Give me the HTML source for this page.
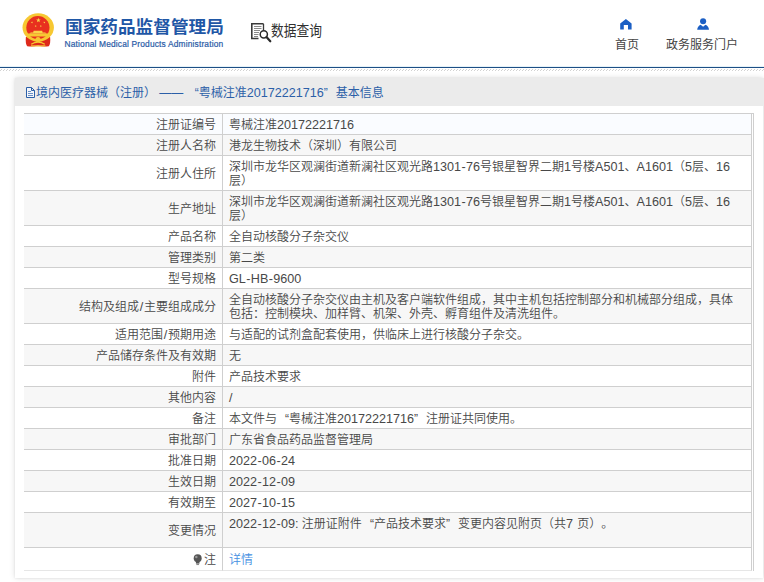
<!DOCTYPE html>
<html lang="zh-CN">
<head>
<meta charset="utf-8">
<title>国家药品监督管理局 数据查询</title>
<style>
*{box-sizing:border-box;margin:0;padding:0}
html,body{width:764px;height:582px;overflow:hidden;background:#fff}
body{text-spacing-trim:space-all;font-family:"Liberation Sans","Noto Sans CJK SC",sans-serif;font-size:12px;color:#444;position:relative}
.hdr{position:absolute;left:0;top:0;width:764px;height:66px;background:#fff}
.emblem{position:absolute;left:19px;top:10px;width:38px;height:40px}
.t1{position:absolute;left:64.5px;top:15px;font-size:16.5px;font-weight:bold;color:#1f57a6;letter-spacing:0;transform:scaleX(1.07);transform-origin:0 0;line-height:24px;white-space:nowrap}
.t2{-webkit-text-stroke:.2px #2a5ba6;position:absolute;left:64.5px;top:37.5px;font-size:8.4px;letter-spacing:.165px;color:#2a5ba6;line-height:12px;white-space:nowrap}
.q{position:absolute;left:270.5px;top:19px;font-size:15px;transform:scaleX(.85);transform-origin:0 0;color:#303030;line-height:24px;white-space:nowrap}
.qi{position:absolute;left:250px;top:22px;width:22px;height:22px}
.nav{position:absolute;top:36.5px;font-size:12px;color:#444;line-height:16px;white-space:nowrap}
.ni{position:absolute}
.bar{position:absolute;left:0;top:66px;width:764px;height:2px;background:linear-gradient(#e6f2f8 0,#e6f2f8 1px,#1d4f85 1px,#1d4f85 2px)}
.hatch{position:absolute;left:0;top:69px;width:764px;height:2px;background:repeating-linear-gradient(90deg,#fff 0,#fff 1px,#d2d2d2 1px,#d2d2d2 2px,#fff 2px,#fff 3px) 0 0/100% 1px no-repeat,repeating-linear-gradient(90deg,#d2d2d2 0,#d2d2d2 1px,#fff 1px,#fff 3px) 0 1px/100% 1px no-repeat}
.box{position:absolute;left:15px;top:78px;width:748px;height:500px;background:#fff;box-shadow:0 0 2px rgba(0,0,0,.08),0 0 6px rgba(0,0,0,.13)}
.bh{height:28px;overflow:hidden;background:#ebebeb;width:760px;color:#2b5fa8;line-height:31px;padding-left:21px;white-space:nowrap;position:relative}
.bh svg{position:absolute;left:11px;top:9px}
.under{position:absolute;left:0;top:578px;width:764px;height:4px;background:#efefef}
table{position:absolute;left:9px;top:35px;width:730px;border-collapse:separate;border-spacing:0;border-top:1px solid #cfcfcf;border-right:1px solid #cfcfcf;padding-right:1px;table-layout:fixed}
td{border-bottom:1px solid #cfcfcf;line-height:14px;padding:4px 6px 2px;white-space:nowrap;vertical-align:middle;font-size:12px;color:#484848;font-weight:350}
td.l{width:199px;text-align:right;border-right:1px solid #cfcfcf;white-space:nowrap}
td.v{border-right:1px solid #cfcfcf}
tr.g td{background:#f7f7f7}
tr.h td{background:#fafcff}
tr:last-child td{border-bottom-color:#e6e6e6;height:23px}
a{color:#4690e2;text-decoration:none}
.n{font-size:12.6px}
.s{margin:0 .7px}
.n i{font-style:normal;margin:0 .4px}
.ql,.qr{display:inline-block;width:12px}
.ql{text-align:right}
.qr{text-align:left}
.vwrap{border-right:1px solid #fff}
</style>
</head>
<body>
<div class="hdr">
<svg class="emblem" viewBox="0 0 38 40">
<path d="M6.9 27 Q6.2 33.5 8.2 36.2 Q13.5 37.2 19 35.6 Q24.5 37.2 29.8 36.2 Q31.8 33.5 31.1 27Z" fill="#de2a1b"/>
<ellipse cx="19.2" cy="17.5" rx="15.7" ry="14.2" fill="#f7c832"/>
<circle cx="18.9" cy="17.6" r="11.6" fill="#e8301f"/>
<path d="M7.6 23.4 H30.2 L29.2 26.4 H8.6Z" fill="#f7c832"/>
<path d="M10.3 23.6 H27.7 L26.2 22.6 H23.6 L23.2 20.7 H14.6 L14.2 22.6 H11.8Z" fill="#f9d648"/>
<path d="M10 27.3 Q19 33.4 28 27.3" fill="none" stroke="#f7c832" stroke-width="1.1"/>
<circle cx="19" cy="29.6" r="2.6" fill="#f7c832"/>
<path d="M12.2 34.2 Q19 30.2 25.8 34.2" fill="none" stroke="#f7c832" stroke-width="1.3"/>
<path d="M12 35.9 H26.4" stroke="#f4b93a" stroke-width="1.3"/>
<polygon points="19.40,7.80 19.99,9.38 21.68,9.46 20.36,10.51 20.81,12.14 19.40,11.21 17.99,12.14 18.44,10.51 17.12,9.46 18.81,9.38" fill="#f9d94a"/><polygon points="13.55,11.55 13.42,12.31 14.08,12.73 13.31,12.84 13.11,13.59 12.77,12.90 12.00,12.95 12.55,12.40 12.26,11.68 12.95,12.04" fill="#f9d94a"/><polygon points="24.75,11.55 25.35,12.04 26.04,11.68 25.75,12.40 26.30,12.95 25.53,12.90 25.19,13.59 24.99,12.84 24.22,12.73 24.88,12.31" fill="#f9d94a"/><polygon points="16.98,15.04 17.06,15.81 17.80,16.04 17.09,16.35 17.09,17.13 16.58,16.55 15.85,16.79 16.24,16.12 15.78,15.50 16.53,15.67" fill="#f9d94a"/><polygon points="21.52,15.04 21.97,15.67 22.72,15.50 22.26,16.12 22.65,16.79 21.92,16.55 21.41,17.13 21.41,16.35 20.70,16.04 21.44,15.81" fill="#f9d94a"/>
</svg>
<div class="t1">国家药品监督管理局</div>
<div class="t2">National Medical Products Administration</div>
<svg class="qi" viewBox="0 0 22 22">
<path d="M13.5 1.8 H1.8 V16.5 H8.5" fill="none" stroke="#3a3a3a" stroke-width="1.6"/>
<path d="M13.5 1.8 V8" fill="none" stroke="#3a3a3a" stroke-width="1.3"/>
<path d="M4 4.5 H11.5 M4 6.5 H11.5 M4 8.5 H10 M4 10.5 H9 M4 12.5 H8.5 M4 14.5 H8" stroke="#8a8a8a" stroke-width="1"/>
<circle cx="13.8" cy="12.3" r="3.6" fill="#fff" stroke="#2a2a2a" stroke-width="1.5"/>
<path d="M16.5 15 L20.3 19.3" stroke="#2a2a2a" stroke-width="2.2" stroke-linecap="round"/>
</svg>
<div class="q">数据查询</div>
<svg class="ni" style="left:620.3px;top:19px" width="11.8" height="10.8" viewBox="0 0 11.8 10.8"><path d="M5.9 0 L0.2 4.6 V10.6 H3.8 V6.1 H8 V10.6 H11.6 V4.6Z" fill="#1b5fc4"/></svg>
<div class="nav" style="left:615px">首页</div>
<svg class="ni" style="left:696.9px;top:18px" width="12.2" height="12" viewBox="0 0 12.2 12"><circle cx="6.1" cy="3.2" r="3.05" fill="#1b5fc4"/><path d="M0.2 11.8 Q0.5 8.3 3.7 6.8 L6.1 8.7 L8.5 6.8 Q11.7 8.3 12 11.8Z" fill="#1b5fc4"/></svg>
<div class="nav" style="left:666px">政务服务门户</div>
</div>
<div class="bar"></div>
<div class="hatch"></div>
<div class="box">
<div class="bh"><svg width="9" height="11" viewBox="0 0 9 11"><path d="M0.5 0.5 H5.5 L8.5 3.5 V10.5 H0.5Z M5.5 0.5 V3.5 H8.5" fill="#f4f6fa" stroke="#2b5fa8" stroke-width="1"/><path d="M2 4.5 H5 M2 6.5 H7 M2 8.5 H7" stroke="#6a8fc6" stroke-width="1"/></svg>境内医疗器械（注册） ——  <span class="ql">“</span>粤械注准<span class="n">20172221716</span><span class="qr">”</span>基本信息</div>
<table cellspacing="0">
<tr class="h"><td class="l">注册证编号</td><td class="v">粤械注准<span class="n">20172221716</span></td></tr>
<tr class="g"><td class="l">注册人名称</td><td class="v">港龙生物技术（深圳）有限公司</td></tr>
<tr><td class="l">注册人住所</td><td class="v">深圳市龙华区观澜街道新澜社区观光路<span class="n">1301<i>-</i>76</span>号银星智界二期<span class="n">1</span>号楼<span class="n">A501</span>、<span class="n">A1601</span>（<span class="n">5</span>层、<span class="n">16</span><br>层）</td></tr>
<tr class="g"><td class="l">生产地址</td><td class="v">深圳市龙华区观澜街道新澜社区观光路<span class="n">1301<i>-</i>76</span>号银星智界二期<span class="n">1</span>号楼<span class="n">A501</span>、<span class="n">A1601</span>（<span class="n">5</span>层、<span class="n">16</span><br>层）</td></tr>
<tr><td class="l">产品名称</td><td class="v">全自动核酸分子杂交仪</td></tr>
<tr class="g"><td class="l">管理类别</td><td class="v">第二类</td></tr>
<tr><td class="l">型号规格</td><td class="v"><span class="n">GL<i>-</i>HB<i>-</i>9600</span></td></tr>
<tr class="g"><td class="l">结构及组成<span class="n s">/</span>主要组成成分</td><td class="v">全自动核酸分子杂交仪由主机及客户端软件组成，其中主机包括控制部分和机械部分组成，具体<br>包括：控制模块、加样臂、机架、外壳、孵育组件及清洗组件。</td></tr>
<tr><td class="l">适用范围<span class="n s">/</span>预期用途</td><td class="v">与适配的试剂盒配套使用，供临床上进行核酸分子杂交。</td></tr>
<tr class="g"><td class="l">产品储存条件及有效期</td><td class="v">无</td></tr>
<tr><td class="l">附件</td><td class="v">产品技术要求</td></tr>
<tr class="g"><td class="l">其他内容</td><td class="v"><span class="n">/</span></td></tr>
<tr><td class="l">备注</td><td class="v">本文件与<span class="ql">“</span>粤械注准<span class="n">20172221716</span><span class="qr">”</span>注册证共同使用。</td></tr>
<tr class="g"><td class="l">审批部门</td><td class="v">广东省食品药品监督管理局</td></tr>
<tr><td class="l">批准日期</td><td class="v"><span class="n">2022<i>-</i>06<i>-</i>24</span></td></tr>
<tr class="g"><td class="l">生效日期</td><td class="v"><span class="n">2022<i>-</i>12<i>-</i>09</span></td></tr>
<tr><td class="l">有效期至</td><td class="v"><span class="n">2027<i>-</i>10<i>-</i>15</span></td></tr>
<tr class="g"><td class="l">变更情况</td><td class="v"><span class="n">2022<i>-</i>12<i>-</i>09:</span> 注册证附件<span class="ql">“</span>产品技术要求<span class="qr">”</span>变更内容见附页（共<span class="n">7</span> &#8202;页）。<br>&nbsp;</td></tr>
<tr><td class="l"><svg width="9.4" height="11.5" viewBox="0 0 9 11" style="vertical-align:-1.5px;margin-right:1.2px"><circle cx="4.5" cy="4" r="3.8" fill="#555"/><rect x="2.8" y="7" width="3.4" height="2.2" fill="#555"/><rect x="3.2" y="9.6" width="2.6" height="1" fill="#888"/><circle cx="3.2" cy="2.8" r="1.2" fill="#999"/></svg>注</td><td class="v"><a>详情</a></td></tr>
</table>
</div>
</body>
</html>
